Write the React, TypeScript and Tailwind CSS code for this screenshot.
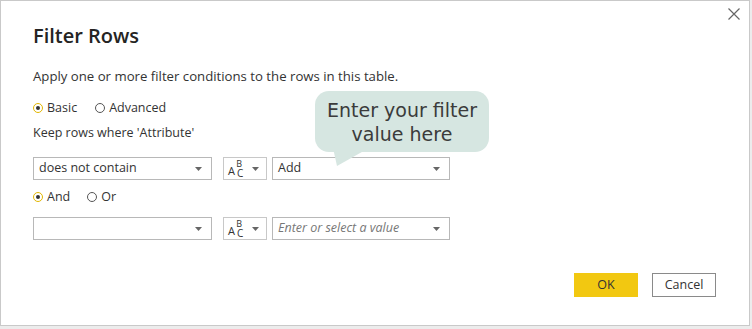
import React from "react";

function Caret() {
  return (
    <svg width="7" height="4" viewBox="0 0 7 4" className="shrink-0">
      <path d="M0 0h7L3.5 4z" fill="#666" />
    </svg>
  );
}

function Radio({ checked, label }: { checked?: boolean; label: string }) {
  return (
    <label className="flex items-center gap-[4px]">
      <span
        className={
          checked
            ? "flex h-[10px] w-[10px] items-center justify-center rounded-full border border-[#e2b600] bg-white"
            : "h-[10px] w-[10px] rounded-full border border-[#555]"
        }
      >
        {checked && <span className="h-[4px] w-[4px] rounded-full bg-[#333]" />}
      </span>
      <span>{label}</span>
    </label>
  );
}

function Select({ value, width, italic }: { value: string; width: string; italic?: boolean }) {
  return (
    <div className={`flex h-[23px] items-center justify-between border border-[#b8b8b8] bg-white pl-[5px] pr-[9px] ${width}`}>
      <span className={italic ? "italic text-[#777]" : "text-[#333]"}>{value}</span>
      <Caret />
    </div>
  );
}

// data type glyph: A, raised B, lowered C
function TypeButton() {
  return (
    <div className="flex h-[23px] w-[44px] items-center gap-[4px] border border-[#c8c8c8] bg-white pl-[4px]">
      <span className="flex w-[20px] items-end text-[#333]">
        <span className="mb-[2px] text-[11px] leading-none">A</span>
        <span className="flex flex-col items-center leading-none">
          <span className="text-[9px] leading-[9px]">B</span>
          <span className="ml-[2px] text-[10px] leading-[10px]">C</span>
        </span>
      </span>
      <Caret />
    </div>
  );
}

function ConditionRow({ op, value, italic }: { op: string; value: string; italic?: boolean }) {
  return (
    <div className="flex items-center">
      <Select value={op} width="w-[179px]" />
      <div className="ml-[11px]">
        <TypeButton />
      </div>
      <div className="ml-[5px]">
        <Select value={value} width="w-[178px]" italic={italic} />
      </div>
    </div>
  );
}

export default function App() {
  return (
    <div className="h-[329px] w-[752px] bg-[#ececec] font-['Open_Sans',sans-serif]">
      <div className="relative h-[326px] w-[750px] border border-[#c9c9c9] bg-white text-[#333]">
        <button className="absolute right-[8px] top-[6px] text-[#666]">
          <svg width="14" height="14" viewBox="0 0 14 14">
            <path d="M1.5 1.5l11 11M12.5 1.5l-11 11" stroke="#666" strokeWidth="1.2" />
          </svg>
        </button>

        <div className="pl-[32px] pt-[21px]">
          <h1 className="text-[20px] font-semibold leading-[28px] text-[#252423]">Filter Rows</h1>
          <p className="mt-[17px] text-[13.2px] leading-[18px]">
            Apply one or more filter conditions to the rows in this table.
          </p>

          <div className="mt-[15px] flex gap-[18px] text-[12.5px] leading-[16px]">
            <Radio checked label="Basic" />
            <Radio label="Advanced" />
          </div>

          <p className="mt-[9px] text-[12.5px] leading-[16px]">Keep rows where 'Attribute'</p>

          <div className="mt-[16px] text-[12.5px]">
            <ConditionRow op="does not contain" value="Add" />
          </div>

          <div className="mt-[9px] flex gap-[17px] text-[12.5px] leading-[16px]">
            <Radio checked label="And" />
            <Radio label="Or" />
          </div>

          <div className="mt-[12px] text-[12.5px]">
            <ConditionRow op="" value="Enter or select a value" italic />
          </div>

          <div className="mt-[33px] mr-[33px] flex justify-end gap-[14px] text-[12.5px]">
            <button className="h-[24px] w-[64px] bg-[#f2c811] text-[#333]">OK</button>
            <button className="h-[24px] w-[64px] border border-[#8a8a8a] bg-white text-[#333]">Cancel</button>
          </div>
        </div>

        <div className="absolute left-[314px] top-[90px]">
          <div className="flex h-[61px] w-[174px] flex-col items-center justify-center rounded-[14px] bg-[#d6e6e1] font-['DejaVu_Sans',sans-serif] text-[19px] leading-[24px] text-[#3b3b3b]">
            <span>Enter your filter</span>
            <span>value here</span>
          </div>
          <svg width="40" height="22" viewBox="0 0 40 22" className="absolute left-[18px] top-[57px]">
            <path d="M0 0h36L4 18z" fill="#d6e6e1" />
          </svg>
        </div>
      </div>
    </div>
  );
}
